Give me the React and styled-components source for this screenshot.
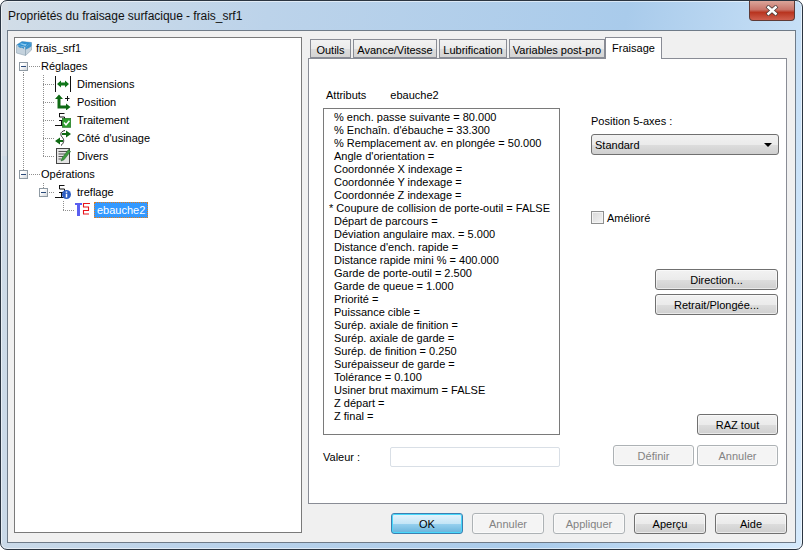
import React from 'react';
import styled, { createGlobalStyle } from 'styled-components';

const GlobalStyle = createGlobalStyle`
  html, body {
    margin: 0;
    padding: 0;
    background: #fff;
  }
  * {
    box-sizing: border-box;
  }
`;

const uiFont = `"Liberation Sans", Arial, sans-serif`;

const Frame = styled.div`
  width: 803px;
  height: 550px;
  padding: 0 6px 6px;
  border: 1px solid #2b3541;
  border-radius: 7px;
  box-shadow: inset 0 0 0 1px rgba(255, 255, 255, 0.55);
  background:
    linear-gradient(#d6dee6 0, #d6dee6 155px, transparent 155px) left top / 7px 100% no-repeat,
    linear-gradient(100deg, #d2dde7 0%, #bcd3ea 30%, #a9cbeb 70%, #d6eafc 100%);
  font-family: ${uiFont};
  font-size: 11px;
  color: #000;
  overflow: hidden;
`;

const TitleBar = styled.div`
  height: 29px;
  display: flex;
  align-items: flex-start;
  justify-content: space-between;
`;

const Title = styled.div`
  padding: 7px 0 0 1px;
  font-size: 12px;
  line-height: 16px;
  letter-spacing: -0.04px;
  color: #111;
`;

const CloseButton = styled.div`
  width: 46px;
  height: 20px;
  margin-right: 1px;
  border: 1px solid #5e3a36;
  border-top: none;
  border-radius: 0 0 4px 4px;
  background: linear-gradient(#dba59a 0%, #c9756a 45%, #b8341f 60%, #cf5f4e 100%);
  display: flex;
  align-items: center;
  justify-content: center;
`;

const Client = styled.div`
  height: 513px;
  padding: 6px 8px 0 6px;
  border: 1px solid #6f7b88;
  background: #f0f0f0;
`;

const Main = styled.div`
  display: grid;
  grid-template-columns: 288px 479px;
  column-gap: 6px;
  align-items: start;
`;

const TreePanel = styled.div`
  height: 496px;
  padding: 1px 0 0;
  border: 1px solid #7a7a7a;
  background: #fff;
`;

const TreeRow = styled.div`
  height: 18px;
  display: flex;
  align-items: stretch;
  white-space: nowrap;
`;

const dots = (angle) =>
  `repeating-linear-gradient(${angle}, #8f8f8f 0 1px, transparent 1px 2px)`;

const Connector = styled.div`
  width: ${(p) => p.$width}px;
  flex: none;
  display: flex;
  align-items: center;
  background-repeat: no-repeat;
  background-image: ${(p) => {
    if (p.$line === 'none') return 'none';
    if (p.$line === 'pass') return dots('to bottom');
    return `${dots('to bottom')}, ${dots('to right')}`;
  }};
  background-size: ${(p) => {
    if (p.$line === 'pass') return '1px 18px';
    if (p.$line === 'branch') return `1px 18px, ${p.$width - p.$at}px 1px`;
    if (p.$line === 'end' || p.$line === 'down') return `1px 9px, ${p.$width - p.$at}px 1px`;
    return 'auto';
  }};
  background-position: ${(p) => {
    if (p.$line === 'pass') return `${p.$at}px 0`;
    if (p.$line === 'branch' || p.$line === 'end') return `${p.$at}px 0, ${p.$at}px 9px`;
    if (p.$line === 'down') return `${p.$at}px 9px, ${p.$at}px 9px`;
    return '0 0';
  }};
`;

const Expander = styled.div`
  width: 9px;
  height: 9px;
  margin-left: ${(p) => p.$at - 4}px;
  border: 1px solid #8f9aa3;
  background: linear-gradient(135deg, #fff 30%, #d4d8dc);
  display: flex;
  align-items: center;
  justify-content: center;

  &::before {
    content: '';
    width: 5px;
    height: 1px;
    background: #2b4a7a;
  }
`;

const NodeIcon = styled.svg`
  width: 16px;
  height: 16px;
  flex: none;
  align-self: center;
  margin-left: ${(p) => p.$left || 0}px;
`;

const NodeLabel = styled.span`
  align-self: center;
  margin-left: ${(p) => p.$left ?? 6}px;
  padding: ${(p) => (p.$selected ? '0 3px' : '0')};
  height: 16px;
  line-height: 17px;
  color: ${(p) => (p.$selected ? '#fff' : '#000')};
  background: ${(p) => (p.$selected ? '#3399ff' : 'transparent')};
  outline: ${(p) => (p.$selected ? '1px dotted #e07b1a' : 'none')};
  outline-offset: -1px;
`;

const RightColumn = styled.div`
  display: flex;
  flex-direction: column;
`;

const TabStrip = styled.div`
  height: 21px;
  padding-left: 2px;
  display: flex;
  align-items: flex-end;
  gap: 2px;
`;

const Tab = styled.div`
  height: ${(p) => (p.$active ? 22 : 19)}px;
  width: ${(p) => p.$width}px;
  margin-bottom: ${(p) => (p.$active ? -1 : 0)}px;
  margin-left: ${(p) => (p.$active ? -2 : 0)}px;
  position: relative;
  padding-top: ${(p) => (p.$active ? 3 : 3)}px;
  border: 1px solid #898c95;
  border-bottom: ${(p) => (p.$active ? 'none' : '1px solid #898c95')};
  background: ${(p) => (p.$active ? '#fff' : 'linear-gradient(#f2f2f2 0%, #ebebeb 50%, #dddddd 51%, #d4d4d4 100%)')};
  text-align: center;
  line-height: 15px;
  white-space: nowrap;
`;

const TabPage = styled.div`
  height: 446px;
  padding: 0 8px 0 14px;
  border: 1px solid #898c95;
  background: #fff;
  display: grid;
  grid-template-columns: 237px 188px;
  column-gap: 31px;
`;

const AttributesColumn = styled.div`
  padding-top: 29px;
  display: flex;
  flex-direction: column;
`;

const AttributesHeader = styled.div`
  height: 15px;
  padding-left: 3px;
  display: flex;
  gap: 24px;
  line-height: 15px;
`;

const AttributesList = styled.div`
  height: 327px;
  margin-top: 5px;
  padding: 2px 0 0 10px;
  border: 1px solid #7a7a7a;
  background: #fff;
`;

const AttributeLine = styled.div`
  height: 13px;
  line-height: 13px;
  white-space: nowrap;
  margin-left: ${(p) => (p.$marked ? -5 : 0)}px;
`;

const ValueRow = styled.div`
  margin-top: 12px;
  display: flex;
  align-items: center;
`;

const ValueLabel = styled.label`
  width: 67px;
`;

const ValueInput = styled.div`
  width: 170px;
  height: 20px;
  border: 1px solid #d9dfe6;
  border-radius: 2px;
  background: #fff;
`;

const OptionsColumn = styled.div`
  padding-top: 55px;
  display: flex;
  flex-direction: column;
  align-items: stretch;
`;

const OptionLabel = styled.div`
  height: 15px;
  line-height: 15px;
`;

const Combo = styled.div`
  height: 21px;
  margin-top: 5px;
  padding: 0 4px 0 3px;
  border: 1px solid #707070;
  border-radius: 3px;
  background: linear-gradient(#f2f2f2 0%, #ebebeb 50%, #dddddd 51%, #cfcfcf 100%);
  display: flex;
  align-items: center;
  justify-content: space-between;
`;

const ComboArrow = styled.div`
  width: 0;
  height: 0;
  margin-right: 2px;
  border-left: 4px solid transparent;
  border-right: 4px solid transparent;
  border-top: 4px solid #000;
`;

const CheckRow = styled.div`
  height: 13px;
  margin-top: 56px;
  display: flex;
  align-items: center;
  gap: 3px;
`;

const CheckBox = styled.div`
  width: 13px;
  height: 13px;
  border: 1px solid #8e8f8f;
  background: linear-gradient(135deg, #d8d8d8, #f4f4f4);
  box-shadow: inset 0 0 0 1px #f4f4f4;
`;

const Button = styled.div`
  width: ${(p) => p.$width}px;
  height: 21px;
  flex: none;
  border: 1px solid ${(p) => (p.$disabled ? '#adb2b5' : p.$primary ? '#3c7fb1' : '#707070')};
  border-radius: 3px;
  box-shadow: ${(p) => (p.$primary ? 'inset 0 0 0 1px #48d8fb' : 'inset 0 0 0 1px rgba(255,255,255,.55)')};
  background: ${(p) =>
    p.$disabled
      ? '#f4f4f4'
      : p.$primary
        ? 'linear-gradient(#e5f4fc 0%, #c4e5f6 50%, #98d1ef 51%, #68b3db 100%)'
        : 'linear-gradient(#f2f2f2 0%, #ebebeb 50%, #dddddd 51%, #cfcfcf 100%)'};
  color: ${(p) => (p.$disabled ? '#838383' : '#000')};
  display: flex;
  align-items: center;
  justify-content: center;
  white-space: nowrap;
`;

const ButtonStack = styled.div`
  margin-top: ${(p) => p.$top}px;
  display: flex;
  flex-direction: column;
  align-items: flex-end;
  gap: 4px;
  padding-right: 1px;
`;

const ButtonPair = styled.div`
  margin-top: 10px;
  display: flex;
  justify-content: flex-end;
  gap: 3px;
  padding-right: 1px;
`;

const DialogButtons = styled.div`
  margin-top: 9px;
  display: flex;
  justify-content: flex-end;
  gap: 9px;
`;

const RootIcon = () => (
  <NodeIcon viewBox="0 0 16 16" $left={1}>
    <path d="M0.5 5 L6 1.5 L15.5 2.5 V10 L9.5 15.5 L0.5 13 Z" fill="#c4d2dd" stroke="#8fa3b2" strokeWidth=".6" />
    <path d="M0.5 5 L9.5 7 L15.5 2.5 L6 1.5 Z" fill="#2f8fd0" />
    <path d="M4 4 C6 1.5 8 5.5 11 3.5 L9.5 6 Z" fill="#8ccbf0" />
    <path d="M9.5 7 V15.5" stroke="#8fa3b2" strokeWidth=".8" />
    <path d="M9.5 7 L15.5 2.5 V6 C13 9 11 8 9.5 10 Z" fill="#3c93cc" />
    <path d="M2 6 C4 9 6 7 8 9 V7 L2 5.5 Z" fill="#3c93cc" />
  </NodeIcon>
);

const DimensionsIcon = () => (
  <NodeIcon viewBox="0 0 16 16">
    <path d="M0.5 0 V16 M15.5 0 V16" stroke="#111" strokeWidth="1" />
    <path d="M2 8 L6 4.5 V6.5 H10 V4.5 L14 8 L10 11.5 V9.5 H6 V11.5 Z" fill="#10761a" />
  </NodeIcon>
);

const PositionIcon = () => (
  <NodeIcon viewBox="0 0 16 16">
    <path d="M4 4 V13 H12" fill="none" stroke="#0f6a14" strokeWidth="3" />
    <path d="M0 5 L4 0.5 L8 5 Z M11 9.5 L15.5 13 L11 16.5 Z" fill="#0f6a14" />
    <path d="M10 4.5 H14.5 M12.5 2 V7" stroke="#111" strokeWidth="1" />
  </NodeIcon>
);

const TreeGlyph = ({ children }) => (
  <NodeIcon viewBox="0 0 16 16">
    <path d="M4 1.5 H9.5 M4.5 1.5 V5 H9.5 V8.5 H4 M6.5 8.5 V13.5 M0 13.5 H9" fill="none" stroke="#111" strokeWidth="1" />
    {children}
  </NodeIcon>
);

const TraitementIcon = () => (
  <TreeGlyph>
    <rect x="7.3" y="6.3" width="8.5" height="9" fill="#2f9e2f" stroke="#1f6d1f" strokeWidth=".6" />
    <path d="M9 10.5 L11 12.8 L14.4 8.8" fill="none" stroke="#fff" strokeWidth="1.5" />
  </TreeGlyph>
);

const CoteIcon = () => (
  <NodeIcon viewBox="0 0 16 16">
    <path d="M10 0.5 C5 1.5 5 5 7.5 7.5 C9.5 10 9 13 6 15.5" fill="none" stroke="#222" strokeWidth="1" />
    <path d="M7 3 H11 V0.5 L16 4 L11 7.5 V5 H7 Z M8 10 H5 V7.5 L0 11 L5 14.5 V12 H8 Z" fill="#0f6a14" />
  </NodeIcon>
);

const DiversIcon = () => (
  <NodeIcon viewBox="0 0 16 16">
    <rect x="1.5" y="0.5" width="13" height="15" fill="#e4e4e4" stroke="#444" />
    <path d="M3.5 3.5 H12 M3.5 6 H10 M3.5 8.5 H8 M3.5 11 H6" stroke="#555" strokeWidth="1" />
    <path d="M6 13 L7 10 L13.5 1.5 L15.5 3.5 L9 11.8 Z" fill="#3f9a3f" stroke="#17591a" strokeWidth=".5" />
  </NodeIcon>
);

const TreflageIcon = () => (
  <TreeGlyph>
    <circle cx="11.5" cy="10.5" r="4.5" fill="#2f5fc4" />
    <path d="M11.5 7.5 V8.7 M11.5 9.7 V13.5" stroke="#fff" strokeWidth="1.5" />
  </TreeGlyph>
);

const EbaucheIcon = () => (
  <NodeIcon viewBox="0 0 16 16">
    <path d="M0 1 H7 V3 H5 V14 H2 V3 H0 Z" fill="#5a5ff0" />
    <path d="M15 1.5 H8.5 V5 H13.5 V8.5 H8.5 V12 H14" fill="none" stroke="#e8141c" strokeWidth="1.1" />
  </NodeIcon>
);

const attributes = [
  '% ench. passe suivante = 80.000',
  '% Enchaîn. d\'ébauche = 33.300',
  '% Remplacement av. en plongée = 50.000',
  'Angle d\'orientation =',
  'Coordonnée X indexage =',
  'Coordonnée Y indexage =',
  'Coordonnée Z indexage =',
  '* Coupure de collision de porte-outil = FALSE',
  'Départ de parcours =',
  'Déviation angulaire max. = 5.000',
  'Distance d\'ench. rapide =',
  'Distance rapide mini % = 400.000',
  'Garde de porte-outil = 2.500',
  'Garde de queue = 1.000',
  'Priorité =',
  'Puissance cible =',
  'Surép. axiale de finition =',
  'Surép. axiale de garde =',
  'Surép. de finition = 0.250',
  'Surépaisseur de garde =',
  'Tolérance = 0.100',
  'Usiner brut maximum = FALSE',
  'Z départ =',
  'Z final =',
];

const settings = [
  { label: 'Dimensions', Icon: DimensionsIcon, line: 'branch' },
  { label: 'Position', Icon: PositionIcon, line: 'branch' },
  { label: 'Traitement', Icon: TraitementIcon, line: 'branch' },
  { label: 'Côté d\'usinage', Icon: CoteIcon, line: 'branch' },
  { label: 'Divers', Icon: DiversIcon, line: 'end' },
];

const tabs = [
  { label: 'Outils', width: 41 },
  { label: 'Avance/Vitesse', width: 84 },
  { label: 'Lubrification', width: 68 },
  { label: 'Variables post-pro', width: 96 },
  { label: 'Fraisage', width: 57, active: true },
];

function App() {
  return (
    <>
      <GlobalStyle />
      <Frame>
        <TitleBar>
          <Title>Propriétés du fraisage surfacique - frais_srf1</Title>
          <CloseButton>
            <svg width="14" height="11" viewBox="0 0 14 11">
              <path d="M2 1 L12 10 M12 1 L2 10" stroke="#4a3a38" strokeWidth="4" />
              <path d="M2.5 1.5 L11.5 9.5 M11.5 1.5 L2.5 9.5" stroke="#fff" strokeWidth="2.4" />
            </svg>
          </CloseButton>
        </TitleBar>
        <Client>
          <Main>
            <TreePanel>
              <TreeRow>
                <RootIcon />
                <NodeLabel $left={4}>frais_srf1</NodeLabel>
              </TreeRow>
              <TreeRow>
                <Connector $width={25} $at={8} $line="down">
                  <Expander $at={8} />
                </Connector>
                <NodeLabel $left={1}>Réglages</NodeLabel>
              </TreeRow>
              {settings.map(({ label, Icon, line }) => (
                <TreeRow key={label}>
                  <Connector $width={18} $at={8} $line="pass" />
                  <Connector $width={22} $at={10} $line={line} />
                  <Icon />
                  <NodeLabel>{label}</NodeLabel>
                </TreeRow>
              ))}
              <TreeRow>
                <Connector $width={25} $at={8} $line="end">
                  <Expander $at={8} />
                </Connector>
                <NodeLabel $left={1}>Opérations</NodeLabel>
              </TreeRow>
              <TreeRow>
                <Connector $width={18} $at={8} $line="none" />
                <Connector $width={22} $at={10} $line="end">
                  <Expander $at={10} />
                </Connector>
                <TreflageIcon />
                <NodeLabel>treflage</NodeLabel>
              </TreeRow>
              <TreeRow>
                <Connector $width={40} $at={0} $line="none" />
                <Connector $width={20} $at={8} $line="end" />
                <EbaucheIcon />
                <NodeLabel $left={3} $selected>ebauche2</NodeLabel>
              </TreeRow>
            </TreePanel>
            <RightColumn>
              <TabStrip>
                {tabs.map((tab) => (
                  <Tab key={tab.label} $active={tab.active} $width={tab.width}>
                    {tab.label}
                  </Tab>
                ))}
              </TabStrip>
              <TabPage>
                <AttributesColumn>
                  <AttributesHeader>
                    <span>Attributs</span>
                    <span>ebauche2</span>
                  </AttributesHeader>
                  <AttributesList>
                    {attributes.map((line) => (
                      <AttributeLine key={line} $marked={line.startsWith('*')}>
                        {line}
                      </AttributeLine>
                    ))}
                  </AttributesList>
                  <ValueRow>
                    <ValueLabel>Valeur :</ValueLabel>
                    <ValueInput />
                  </ValueRow>
                </AttributesColumn>
                <OptionsColumn>
                  <OptionLabel>Position 5-axes :</OptionLabel>
                  <Combo>
                    <span>Standard</span>
                    <ComboArrow />
                  </Combo>
                  <CheckRow>
                    <CheckBox />
                    <span>Amélioré</span>
                  </CheckRow>
                  <ButtonStack $top={45}>
                    <Button $width={123}>Direction...</Button>
                    <Button $width={123}>Retrait/Plongée...</Button>
                  </ButtonStack>
                  <ButtonStack $top={99}>
                    <Button $width={81}>RAZ tout</Button>
                  </ButtonStack>
                  <ButtonPair>
                    <Button $width={81} $disabled>Définir</Button>
                    <Button $width={81} $disabled>Annuler</Button>
                  </ButtonPair>
                </OptionsColumn>
              </TabPage>
              <DialogButtons>
                <Button $width={72} $primary>OK</Button>
                <Button $width={72} $disabled>Annuler</Button>
                <Button $width={72} $disabled>Appliquer</Button>
                <Button $width={72}>Aperçu</Button>
                <Button $width={72}>Aide</Button>
              </DialogButtons>
            </RightColumn>
          </Main>
        </Client>
      </Frame>
    </>
  );
}

export default App;
